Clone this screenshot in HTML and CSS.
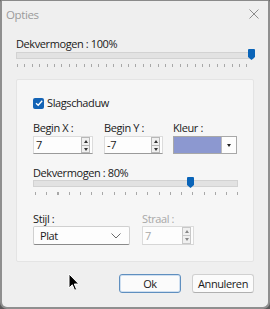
FILE: index.html
```html
<!DOCTYPE html>
<html>
<head>
<meta charset="utf-8">
<link rel="stylesheet" href="styles.css">
</head>
<body>
<div class="window">
  <div class="titlebar">
    <span class="title">Opties</span>
    <svg class="close" width="10" height="10" viewBox="0 0 10 10"><path d="M0.5 0.5 L9.5 9.5 M9.5 0.5 L0.5 9.5" stroke="#8c8c8c" stroke-width="1" fill="none"/></svg>
  </div>
  <div class="content">
    <div class="label top-label">Dekvermogen : 100%</div>
    <div class="slider wide">
      <div class="track"></div>
      <div class="thumb" style="left: 232px"></div>
    </div>
    <div class="ticks wide-ticks"></div>

    <div class="group">
      <div class="check-row">
        <span class="checkbox"><svg width="10" height="10" viewBox="0 0 10 10"><path d="M2 5.2 L4.2 7.3 L8.2 2.8" stroke="#fff" stroke-width="1.3" fill="none"/></svg></span>
        <span class="label">Slagschaduw</span>
      </div>
      <div class="fields">
        <div class="field fx">
          <div class="label">Begin X :</div>
          <div class="spin">
            <span class="val">7</span>
            <span class="spin-btns"><span class="up"></span><span class="down"></span></span>
          </div>
        </div>
        <div class="field fy">
          <div class="label">Begin Y :</div>
          <div class="spin">
            <span class="val">-7</span>
            <span class="spin-btns"><span class="up"></span><span class="down"></span></span>
          </div>
        </div>
        <div class="field fc">
          <div class="label">Kleur :</div>
          <div class="color">
            <span class="swatch"></span>
            <span class="drop"><span class="tri"></span></span>
          </div>
        </div>
      </div>
      <div class="label mid-label">Dekvermogen : 80%</div>
      <div class="slider narrow">
        <div class="track"></div>
        <div class="thumb" style="left: 154px"></div>
      </div>
      <div class="ticks narrow-ticks"></div>
      <div class="fields2">
        <div class="field fs">
          <div class="label">Stijl :</div>
          <div class="combo">
            <span class="val">Plat</span>
            <svg class="chev" width="10" height="6" viewBox="0 0 10 6"><path d="M0.5 0.5 L5 5 L9.5 0.5" stroke="#6a6a6a" stroke-width="1" fill="none"/></svg>
          </div>
        </div>
        <div class="field fr disabled">
          <div class="label">Straal :</div>
          <div class="spin">
            <span class="val">7</span>
            <span class="spin-btns"><span class="up"></span><span class="down"></span></span>
          </div>
        </div>
      </div>
    </div>

    <div class="buttons">
      <button class="btn default">Ok</button>
      <button class="btn">Annuleren</button>
    </div>
  </div>
  <svg class="cursor" width="12" height="19" viewBox="0 0 12 19"><path d="M1 1 L1 15 L4.3 11.8 L6.6 17.3 L8.6 16.4 L6.3 11 L10.8 11 Z" fill="#000" stroke="#fff" stroke-width="1"/></svg>
</div>
</body>
</html>
```

FILE: styles.css
```css
* { box-sizing: border-box; }
html, body { margin: 0; padding: 0; background: #5a5a5a; }
body {
  width: 270px;
  height: 309px;
  font-family: "Open Sans", "Noto Sans", sans-serif;
  font-size: 11px;
  letter-spacing: -0.4px;
  color: #1a1a1a;
}
.window {
  position: relative;
  width: 270px;
  height: 309px;
  background: #efefef;
  border: 2px solid #8f8f8f;
  border-top: 1px solid #8a8a8a;
  border-radius: 2px 2px 7px 7px;
  display: flex;
  flex-direction: column;
}
.titlebar {
  height: 26px;
  display: flex;
  align-items: center;
  justify-content: space-between;
  padding: 0 9px 0 4px;
}
.title { color: #9b9b9b; font-size: 11.5px; }
.content {
  padding: 0 14px;
  display: flex;
  flex-direction: column;
}
.label { line-height: 14px; white-space: nowrap; }
.top-label { margin-top: 10px; }
.slider { position: relative; height: 12px; }
.track {
  position: absolute;
  left: 0; right: 0; top: 3px;
  height: 7px;
  background: #e2e2e2;
  border: 1px solid #d2d2d2;
}
.thumb {
  position: absolute;
  top: 0;
  width: 7px;
  height: 11px;
  background: #0a64b8;
  clip-path: polygon(0 0, 100% 0, 100% 72%, 50% 100%, 0 72%);
  border-radius: 1px;
}
.wide { margin-top: -2px; width: 238px; }
.ticks { height: 3px; margin-top: 3px; }
.wide-ticks {
  width: 236px;
  margin-left: 1px;
  background: repeating-linear-gradient(to right, #a8a8a8 0 1px, transparent 1px 7.4px);
}
.group {
  margin-top: 12px;
  width: 238px;
  height: 183px;
  background: #f6f6f6;
  border: 1px solid #e4e4e4;
  border-radius: 2px;
  padding: 0 16px;
  display: flex;
  flex-direction: column;
}
.check-row {
  margin-top: 16px;
  display: flex;
  align-items: center;
  gap: 3px;
}
.checkbox {
  width: 11px; height: 11px;
  background: #1363b5;
  border-radius: 2px;
  display: flex; align-items: center; justify-content: center;
}
.fields { display: flex; margin-top: 11px; }
.field { display: flex; flex-direction: column; gap: 1px; }
.fx { width: 71px; }
.fy { width: 69px; }
.spin {
  height: 18px;
  background: #fdfdfd;
  border: 1px solid #dcdcdc;
  border-bottom-color: #9a9a9a;
  display: flex;
  align-items: center;
  justify-content: space-between;
  padding-left: 2px;
}
.fx .spin { width: 60px; }
.fy .spin { width: 59px; }
.val { line-height: 14px; }
.spin-btns {
  display: flex; flex-direction: column;
  width: 9px; height: 16px;
  margin-right: 2px;
}
.spin-btns span {
  flex: 1;
  border: 1px solid #b8b8b8;
  background: #f0f0f0;
  position: relative;
}
.spin-btns .up { border-bottom: none; }
.spin-btns .up::after, .spin-btns .down::after {
  content: "";
  position: absolute;
  left: 1.5px;
  width: 0; height: 0;
  border-left: 2.5px solid transparent;
  border-right: 2.5px solid transparent;
}
.spin-btns .up::after { top: 2px; border-bottom: 3px solid #333; }
.spin-btns .down::after { top: 2px; border-top: 3px solid #333; }
.color {
  width: 64px; height: 18px;
  border: 1px solid #a8a8a8;
  display: flex;
  background: #fdfdfd;
}
.swatch { width: 48px; background: #8c98d0; border-right: 1px solid #bcbcbc; }
.drop { flex: 1; display: flex; align-items: center; justify-content: center; }
.tri { width: 0; height: 0; border-left: 2.5px solid transparent; border-right: 2.5px solid transparent; border-top: 3px solid #222; }
.mid-label { margin-top: 12px; }
.narrow { margin-top: -3px; width: 205px; }
.narrow-ticks {
  width: 203px; margin-left: 2px;
  background: repeating-linear-gradient(to right, #a8a8a8 0 1px, transparent 1px 11.25px);
}
.fields2 { display: flex; margin-top: 17px; }
.fs { width: 109px; gap: 0; }
.fr { gap: 0; }
.combo {
  width: 97px; height: 19px;
  background: #fdfdfd;
  border: 1px solid #d0d0d0;
  border-bottom-color: #8a8a8a;
  border-radius: 2px;
  display: flex; align-items: center; justify-content: space-between;
  padding: 0 8px 0 6px;
}
.fr .spin { width: 52px; height: 19px; }
.disabled .label, .disabled .val { color: #a8a8a8; }
.disabled .spin { border-bottom-color: #d6d6d6; }
.disabled .spin-btns { height: 17px; }
.disabled .spin-btns span { border-color: #c8c8c8; }
.disabled .spin-btns .up::after { border-bottom-color: #888; }
.disabled .spin-btns .down::after { border-top-color: #888; }
.buttons {
  margin-top: 12px;
  display: flex;
  justify-content: flex-end;
  gap: 11px;
  width: 238px;
}
.btn {
  font-family: inherit;
  font-size: 11px;
  letter-spacing: -0.4px;
  color: #1a1a1a;
  height: 19px;
  width: 62px;
  padding: 0;
  background: #fbfbfb;
  border: 1px solid #d0d0d0;
  border-bottom-color: #b0b0b0;
  border-radius: 3px;
}
.btn.default { border: 1px solid #5f8fbf; box-shadow: inset 0 0 0 1px #cfdff0; }
.cursor { position: absolute; left: 66px; top: 272px; }
```
